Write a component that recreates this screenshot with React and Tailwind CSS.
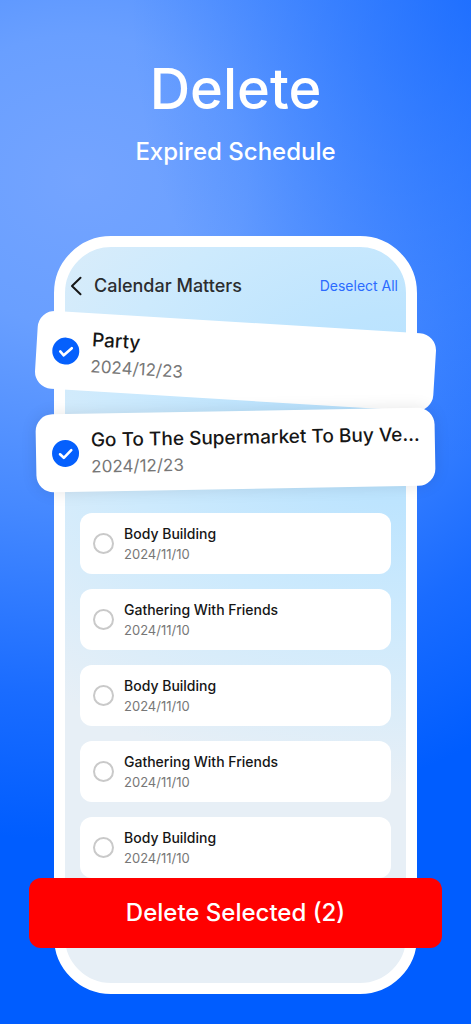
import { useState } from "react";

const INITIAL_ITEMS = [
  { id: 1, title: "Party", date: "2024/12/23", featured: true, selected: true },
  { id: 2, title: "Go To The Supermarket To Buy Ve...", date: "2024/12/23", featured: true, selected: true },
  { id: 3, title: "Body Building", date: "2024/11/10", selected: false },
  { id: 4, title: "Gathering With Friends", date: "2024/11/10", selected: false },
  { id: 5, title: "Body Building", date: "2024/11/10", selected: false },
  { id: 6, title: "Gathering With Friends", date: "2024/11/10", selected: false },
  { id: 7, title: "Body Building", date: "2024/11/10", selected: false },
];

function CheckCircle({ checked, onChange, large }) {
  return (
    <span className={`grid shrink-0 ${large ? "size-[27px]" : "size-[21px]"}`}>
      <input
        type="checkbox"
        checked={checked}
        onChange={onChange}
        className="col-start-1 row-start-1 size-full cursor-pointer appearance-none rounded-full border-2 border-[#c9c9c9] bg-white checked:border-[#0560fd] checked:bg-[#0560fd]"
      />
      {checked && (
        <svg viewBox="0 0 27 27" fill="none" className="pointer-events-none col-start-1 row-start-1 size-full">
          <path
            d="M8 14.2l3.7 3.6 7.6-7.6"
            stroke="white"
            strokeWidth="2.6"
            strokeLinecap="round"
            strokeLinejoin="round"
          />
        </svg>
      )}
    </span>
  );
}

function FeaturedCard({ item, onToggle, className }) {
  return (
    <label
      className={`-mx-[29px] flex h-[78px] cursor-pointer items-center gap-3 rounded-[17px] bg-white pl-4 pr-3 ${className}`}
    >
      <CheckCircle large checked={item.selected} onChange={() => onToggle(item.id)} />
      <span className="flex min-w-0 flex-col whitespace-nowrap">
        <span className="text-[19px] leading-[28px] font-medium text-[#161616]">{item.title}</span>
        <span className="text-[17px] leading-6 text-[#777777]">{item.date}</span>
      </span>
    </label>
  );
}

function ScheduleRow({ item, onToggle }) {
  return (
    <li>
      <label className="flex h-[61px] cursor-pointer items-center gap-2.5 rounded-xl bg-white pl-[13px] pr-3">
        <CheckCircle checked={item.selected} onChange={() => onToggle(item.id)} />
        <span className="flex min-w-0 flex-col">
          <span className="text-sm leading-5 font-medium text-[#161616]">{item.title}</span>
          <span className="text-[13px] leading-5 text-[#777777]">{item.date}</span>
        </span>
      </label>
    </li>
  );
}

export default function App() {
  const [items, setItems] = useState(INITIAL_ITEMS);

  const selectedCount = items.filter((item) => item.selected).length;
  const [first, second] = items.filter((item) => item.featured);
  const rest = items.filter((item) => !item.featured);

  const toggleItem = (id) => {
    setItems(items.map((item) => (item.id === id ? { ...item, selected: !item.selected } : item)));
  };

  const deselectAll = () => {
    setItems(items.map((item) => ({ ...item, selected: false })));
  };

  return (
    <main className="min-h-screen overflow-hidden bg-[#005dff] bg-[radial-gradient(ellipse_340px_460px_at_100%_0%,#0f65ff99_0%,#0f65ff00_100%),radial-gradient(ellipse_760px_660px_at_80px_180px,#74a4ff_0%,#699fff_22%,#4689ff_50%,#1a6cff_78%,#005dff_100%)] pb-[31px] font-[Inter,sans-serif]">
      <header className="flex flex-col items-center pt-[54px] text-white">
        <h1 className="text-[56px] leading-[70px] font-medium">Delete</h1>
        <p className="mt-3 text-2xl leading-8 font-medium">Expired Schedule</p>
      </header>

      <section className="mx-[54px] mt-[68px] rounded-[57px] border-[11px] border-white bg-[#e7eff6] bg-[radial-gradient(ellipse_540px_380px_at_100%_160px,#b5e1ff_0%,#bde4fe_25%,#cdeafd_55%,#e7eff6_100%)] pt-6 pb-[35px]">
        <div className="flex h-[30px] items-center pl-[5px] pr-2">
          <button type="button" aria-label="Back" className="cursor-pointer">
            <svg viewBox="0 0 12 20" fill="none" className="h-5 w-3">
              <path d="M10.5 1.8L2 10l8.5 8.2" stroke="#161616" strokeWidth="2" strokeLinecap="round" strokeLinejoin="round" />
            </svg>
          </button>
          <h2 className="ml-3 text-lg leading-6 font-medium text-[#2b2d2f]">Calendar Matters</h2>
          <button type="button" onClick={deselectAll} className="ml-auto cursor-pointer text-sm leading-5 text-[#2b6bff]">
            Deselect All
          </button>
        </div>

        <FeaturedCard item={first} onToggle={toggleItem} className="mt-[21px] rotate-[3.5deg]" />
        <FeaturedCard
          item={second}
          onToggle={toggleItem}
          className="mt-[11px] -rotate-[1deg] shadow-[0_0_16px_rgba(0,0,0,0.1)]"
        />

        <ul className="mt-6 flex flex-col gap-[15px] px-[15px]">
          {rest.map((item) => (
            <ScheduleRow key={item.id} item={item} onToggle={toggleItem} />
          ))}
        </ul>

        <button
          type="button"
          className="-mx-9 flex h-[70px] w-[calc(100%+72px)] cursor-pointer items-center justify-center rounded-xl bg-[#ff0000] text-2xl leading-8 font-medium text-white"
        >
          Delete Selected ({selectedCount})
        </button>
      </section>
    </main>
  );
}
